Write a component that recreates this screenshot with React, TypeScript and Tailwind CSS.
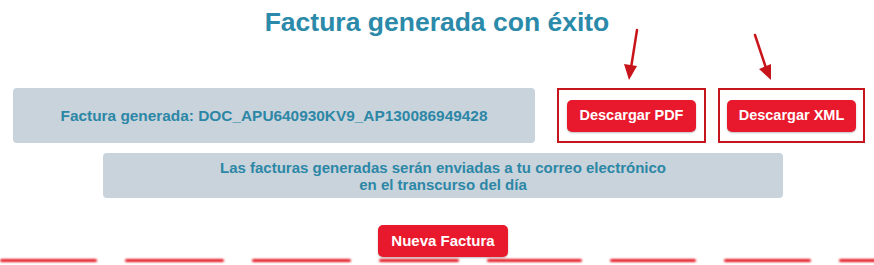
import React from 'react';

const tabs = [
    { label: 'Datos', left: 'ml-[353px] w-[66px]' },
    { label: 'Factura', left: 'ml-[127px] w-[94px]' },
    { label: 'Nueva Factura', left: 'ml-[80px] w-[134px]' },
];

const dashes = [97, 99, 99, 80, 95, 86, 87, 60];

function RedButton({ label, className = '' }: { label: string; className?: string }) {
    return (
        <button
            className={`h-[32px] rounded-[5px] bg-[#e8192c] text-white font-bold text-[14.5px] shadow-[0_1px_2px_rgba(0,0,0,0.25)] ${className}`}
        >
            {label}
        </button>
    );
}

/**
 * Pantalla de factura generada
 */
export default function App() {
    return (
        <div
            className="relative w-[874px] h-[265px] overflow-hidden bg-white"
            style={{ fontFamily: '"Liberation Sans", Arial, sans-serif' }}
        >
            {/* Pestañas recortadas arriba */}
            <div className="flex h-[4px] overflow-hidden">
                {tabs.map((t) => (
                    <div key={t.label} className={`${t.left} shrink-0 -mt-[18px] text-[18px] leading-[24px] font-bold text-[#ededed] text-center`}>
                        {t.label}
                    </div>
                ))}
            </div>

            {/* Título */}
            <h1 className="mt-[1px] ml-[250px] w-[374px] text-center text-[26.5px] leading-[34px] font-bold text-[#2b8aaa]">
                Factura generada con éxito
            </h1>

            {/* Fila principal */}
            <div className="mt-[49px] flex items-center h-[55px]">
                <div className="ml-[13px] w-[522px] h-[55px] rounded-[4px] bg-[#c9d3dc] flex items-center justify-center text-[15.4px] font-bold text-[#2c87a6]">
                    Factura generada: DOC_APU640930KV9_AP130086949428
                </div>
                <div className="ml-[22px] w-[149px] h-[55px] border-2 border-[#c4161c] flex items-center justify-center">
                    <RedButton label="Descargar PDF" className="w-[129px]" />
                </div>
                <div className="ml-[12px] w-[147px] h-[55px] border-2 border-[#c4161c] flex items-center justify-center">
                    <RedButton label="Descargar XML" className="w-[129px]" />
                </div>
            </div>

            {/* Aviso de correo */}
            <div className="mt-[10px] ml-[103px] w-[680px] h-[45px] rounded-[4px] bg-[#c9d3dc] flex flex-col items-center justify-center text-[15px] leading-[17px] font-bold text-[#2c87a6]">
                <span>Las facturas generadas serán enviadas a tu correo electrónico</span>
                <span>en el transcurso del día</span>
            </div>

            {/* Nueva factura */}
            <div className="mt-[27px] ml-[378px]">
                <RedButton label="Nueva Factura" className="w-[130px] text-[15px]" />
            </div>

            {/* Línea punteada inferior */}
            <div className="mt-[2px] flex gap-[28px] h-[4px] blur-[1px]">
                {dashes.map((w, i) => (
                    <div key={i} className="h-[3px] bg-[#e3141f] rounded-full shrink-0" style={{ width: w }} />
                ))}
            </div>

            {/* Flechas de anotación */}
            <svg className="absolute left-0 top-0 pointer-events-none" width="874" height="265">
                <g stroke="#c8141b" strokeWidth="2.5" fill="#c8141b" strokeLinecap="round">
                    <line x1="637" y1="30" x2="631" y2="68" />
                    <polygon points="624,64 637,66 629,80" stroke="none" />
                    <line x1="755" y1="35" x2="766" y2="68" />
                    <polygon points="759,69 771,64 771,80" stroke="none" />
                </g>
            </svg>
        </div>
    );
}
